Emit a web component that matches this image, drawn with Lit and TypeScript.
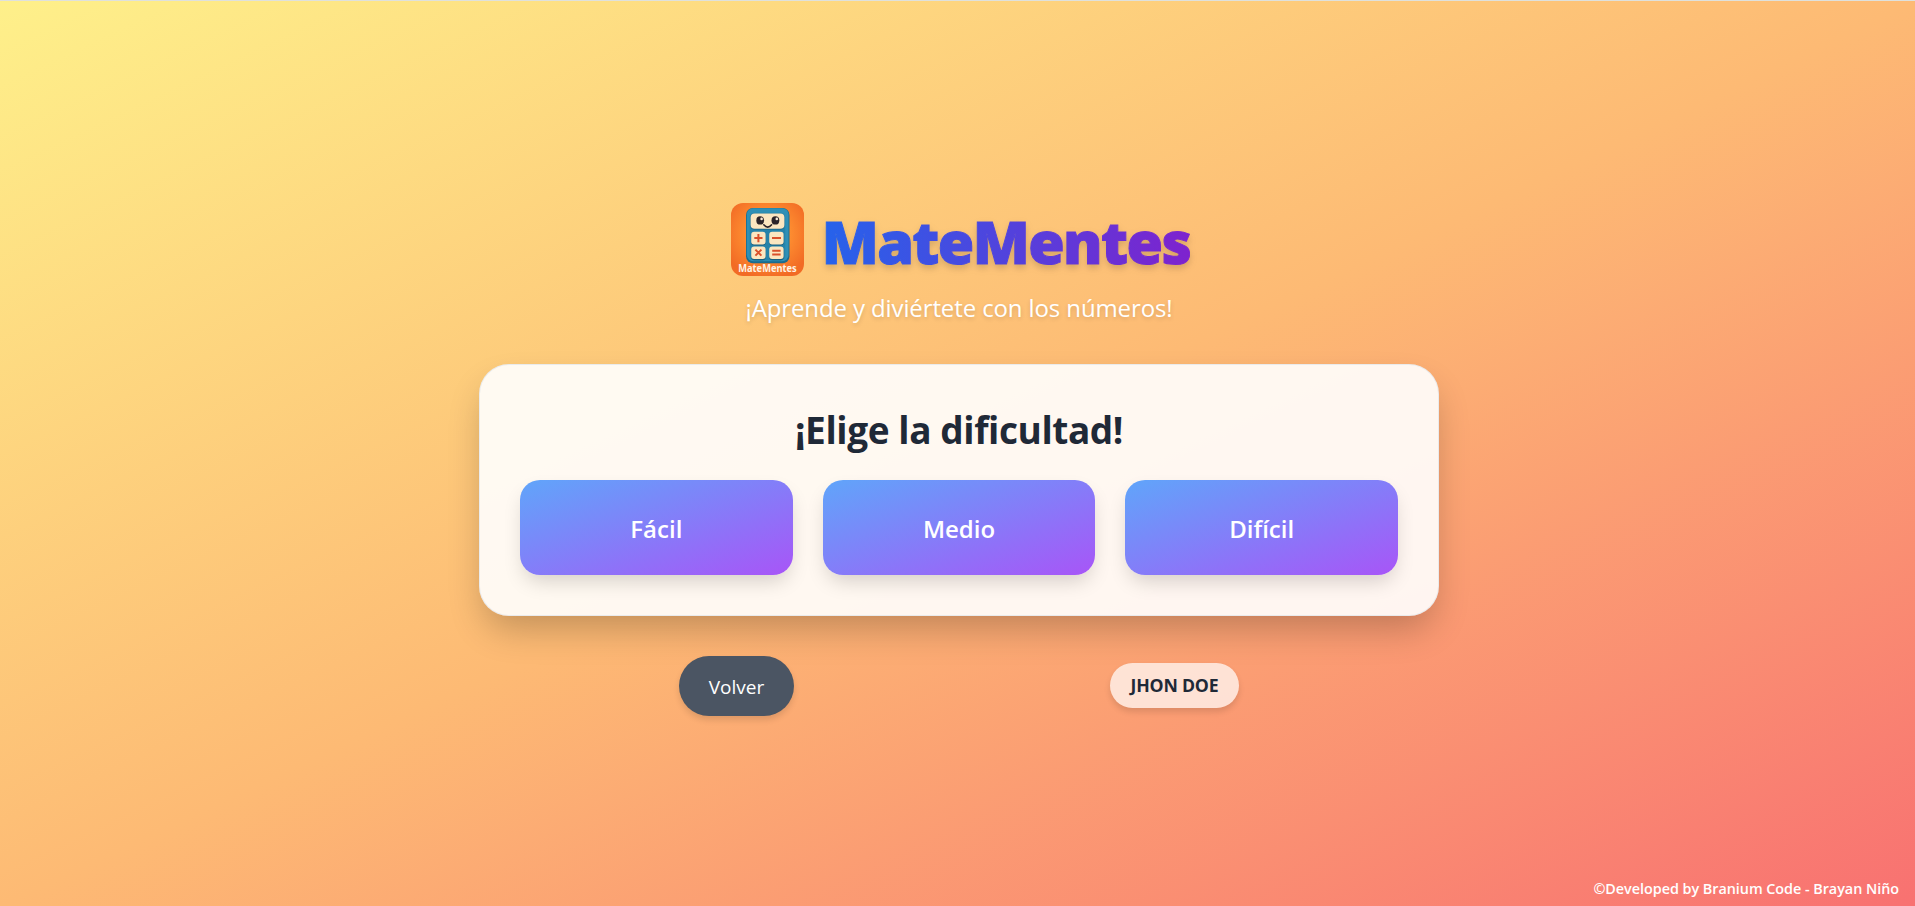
import { LitElement, html, css, svg } from "lit";
import { customElement } from "lit/decorators.js";

@customElement("app-logo")
class AppLogo extends LitElement {
  static styles = css`
    :host { display: block; width: 73px; height: 73px; }
    svg { display: block; width: 73px; height: 73px; }
    .name { font: 700 10px "Noto Sans", "Open Sans", sans-serif; }
  `;
  private key(x: number, y: number) {
    return svg`<rect x=${x} y=${y + 0.8} width="14.4" height="13" rx="3" fill="#175f80"/>
      <rect x=${x} y=${y} width="14.4" height="12.7" rx="3" fill="#fbe6c0"/>`;
  }
  render() {
    return html`<svg viewBox="0 0 73 73" role="img" aria-label="MateMentes">
      <defs>
        <radialGradient id="glow" cx="50%" cy="42%" r="62%">
          <stop offset="0" stop-color="#ffa63c"/><stop offset=".5" stop-color="#fd8c30"/><stop offset="1" stop-color="#f26b25"/>
        </radialGradient>
      </defs>
      <rect width="73" height="73" rx="12" fill="url(#glow)"/>
      <rect x="15" y="5" width="43.5" height="55.3" rx="7" fill="#1b6c8e"/>
      <rect x="15.8" y="5.2" width="41.8" height="53" rx="6.4" fill="#2e90b6"/>
      <rect x="18.6" y="9.8" width="35.6" height="47.4" rx="4.5" fill="#2583aa"/>
      <rect x="19.4" y="10.8" width="34" height="15.8" rx="4" fill="#175f80"/>
      <rect x="19.6" y="10.6" width="33.8" height="15.2" rx="4" fill="#fbe6c0"/>
      <ellipse cx="29.2" cy="17.4" rx="3.9" ry="4.2" fill="#2b2429"/>
      <ellipse cx="44.4" cy="17.4" rx="3.9" ry="4.2" fill="#2b2429"/>
      <circle cx="30.6" cy="15.9" r="1.3" fill="#f7ead8"/>
      <circle cx="45.8" cy="15.9" r="1.3" fill="#f7ead8"/>
      <path d="M32.8 21.8q3.9 4.6 7.8 0" fill="none" stroke="#2b2429" stroke-width="1.6" stroke-linecap="round"/>
      ${this.key(20.2, 28.7)}${this.key(38.2, 28.7)}${this.key(20.2, 43.4)}${this.key(38.2, 43.4)}
      <g fill="none" stroke="#d9502b" stroke-width="2">
        <path d="M27.4 31v8.2M23.3 35.1h8.2M41 35.1h9"/>
        <path d="M24.4 46.6l6 6M30.4 46.6l-6 6M41.2 47.7h8.4M41.2 51.5h8.4"/>
      </g>
      <text class="name" x="36.5" y="68.8" text-anchor="middle" textLength="58.5" lengthAdjust="spacingAndGlyphs" fill="#fff3e2">MateMentes</text>
    </svg>`;
  }
}

@customElement("app-root")
class AppRoot extends LitElement {
  static styles = css`
    :host {
      display: block;
      font-family: "Segoe UI", "Open Sans", "Noto Sans", sans-serif;
    }
    .page {
      box-sizing: border-box;
      height: 906px;
      border-top: 1px solid #dfe1dc;
      padding-left: 3px;
      display: flex;
      flex-direction: column;
      align-items: center;
      overflow: hidden;
      background: linear-gradient(to bottom right, #fef08a, #fdba74, #f87171);
    }
    .brand {
      display: flex;
      gap: 18px;
      margin-top: 202px;
      padding-left: 3px;
      height: 73px;
    }
    h1, h2, p { margin: 0; white-space: nowrap; }
    h1 {
      font-family: "Segoe UI Black", "Noto Sans", "Open Sans", sans-serif;
      font-size: 59px;
      line-height: 77px;
      height: 80px;
      font-weight: 900;
      letter-spacing: -1.6px;
      color: transparent;
      -webkit-text-stroke: 1px transparent;
      background: linear-gradient(to right, #2563eb, #7e22ce);
      background-clip: text;
      -webkit-background-clip: text;
      filter: drop-shadow(0 4px 3px rgba(0, 0, 0, 0.1)) drop-shadow(0 3px 4px rgba(0, 0, 0, 0.06));
    }
    .tagline {
      margin-top: 14px;
      font-size: 24px;
      line-height: 36px;
      letter-spacing: -0.115px;
      color: #fff;
      text-shadow: 0 2px 4px rgba(0, 0, 0, 0.15);
    }
    .card {
      box-sizing: border-box;
      width: 960px;
      height: 252px;
      margin-top: 38px;
      padding: 40px;
      border: 1px solid rgba(229, 231, 235, 0.8);
      border-radius: 30px;
      background: rgba(255, 255, 255, 0.9);
      box-shadow: 0 18px 36px -6px rgba(0, 0, 0, 0.24);
    }
    h2 {
      font-size: 37px;
      line-height: 49px;
      margin-bottom: 26px;
      text-align: center;
      font-weight: 700;
      letter-spacing: -0.42px;
      color: #1f2937;
    }
    .levels {
      display: grid;
      grid-template-columns: repeat(3, 1fr);
      gap: 30px;
    }
    button {
      border: 0;
      padding: 0;
      font-family: inherit;
      color: #fff;
    }
    .level {
      height: 95px;
      padding-top: 1px;
      border-radius: 20px;
      font-size: 24px;
      font-weight: 600;
      background: linear-gradient(to bottom right, #60a5fa, #a855f7);
      box-shadow: 0 10px 20px -4px rgba(0, 0, 0, 0.17);
    }
    .actions {
      box-sizing: border-box;
      width: 960px;
      padding: 0 200px;
      margin-top: 40px;
      display: flex;
      align-items: center;
      justify-content: space-between;
    }
    .back {
      width: 115px;
      height: 60px;
      padding-top: 1px;
      border-radius: 30px;
      font-size: 19px;
      background: #4b5563;
      box-shadow: 0 4px 6px rgba(0, 0, 0, 0.12);
    }
    .player {
      width: 129px;
      margin-bottom: 1px;
      text-align: center;
      line-height: 45px;
      border-radius: 23px;
      font-size: 17.7px;
      font-weight: 700;
      letter-spacing: -0.2px;
      color: #1f2937;
      background: rgba(255, 255, 255, 0.7);
      box-shadow: 0 4px 6px rgba(0, 0, 0, 0.12);
    }
    .credit {
      align-self: flex-end;
      margin: auto 16px 7px 0;
      font-size: 14.4px;
      line-height: 20px;
      font-weight: 600;
      letter-spacing: -0.04px;
      color: #fff;
    }
  `;
  render() {
    return html`<main class="page">
      <header class="brand"><app-logo></app-logo><h1>MateMentes</h1></header>
      <p class="tagline">¡Aprende y diviértete con los números!</p>
      <section class="card">
        <h2>¡Elige la dificultad!</h2>
        <div class="levels">
          ${["Fácil", "Medio", "Difícil"].map((l) => html`<button class="level">${l}</button>`)}
        </div>
      </section>
      <div class="actions">
        <button class="back">Volver</button>
        <div class="player">JHON DOE</div>
      </div>
      <p class="credit">©Developed by Branium Code - Brayan Niño</p>
    </main>`;
  }
}
